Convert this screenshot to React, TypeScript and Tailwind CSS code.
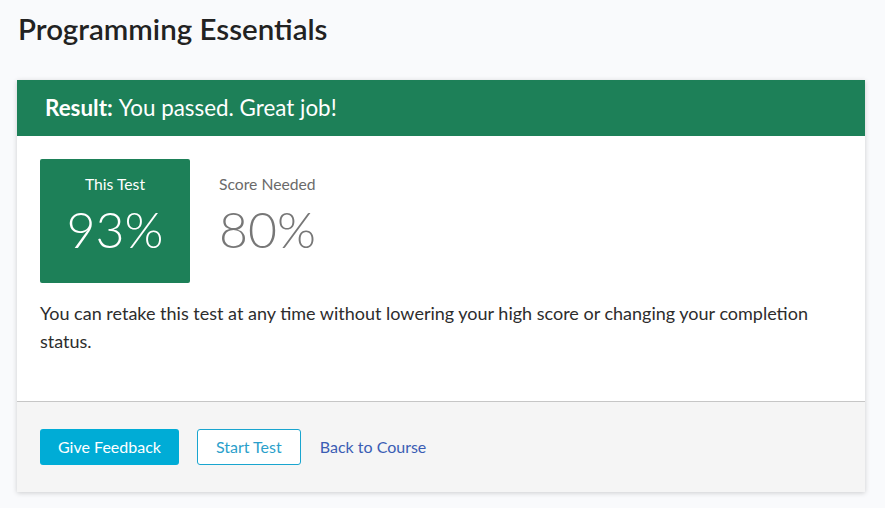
export default function App() {
  return (
    <div className="min-h-[508px] bg-[#f9fafc] px-[17px] pt-[11px] pb-[16px] font-['Lato',sans-serif]">
      <h1 className="pl-[1px] text-[29.5px] font-semibold leading-[36px] text-[#222]">Programming Essentials</h1>

      <div className="mt-[33px] w-[848px] bg-white shadow-[0_1px_5px_rgba(0,0,0,0.18)]">
        {/* header */}
        <div className="flex h-[56px] items-center bg-[#1d8058] px-[28px] text-[22.4px] text-white">
          <span className="font-bold">Result:</span>
          <span className="ml-[6px]">You passed. Great job!</span>
        </div>

        {/* scores */}
        <div className="px-[23px] pt-[23px] pb-[46px]">
          <div className="flex gap-[29px]">
            <div className="flex h-[124px] w-[150px] flex-col items-center rounded-[2px] bg-[#1d8058] pt-[16px] text-white">
              <div className="text-[15.7px] leading-[18px]">This Test</div>
              <div className="mt-[8px] text-[50px] font-light leading-[56px]">93%</div>
            </div>
            <div className="flex flex-col pt-[16px] text-[#777]">
              <div className="text-[15.7px] leading-[18px] text-[#6a6a6a]">Score Needed</div>
              <div className="mt-[8px] text-[50px] font-light leading-[56px]">80%</div>
            </div>
          </div>
          <p className="mt-[16px] max-w-[790px] text-[18px] leading-[28px] text-[#2d2d2d]">
            You can retake this test at any time without lowering your high score or changing your completion status.
          </p>
        </div>

        {/* footer */}
        <div className="flex h-[91px] items-center gap-[18px] border-t border-[#c6c6c6] bg-[#f5f5f5] px-[23px]">
          <button className="h-[36px] rounded-[3px] bg-[#00acd6] px-[18px] text-[16px] text-white">Give Feedback</button>
          <button className="h-[36px] rounded-[3px] border border-[#19a5cf] bg-white px-[18px] text-[16px] text-[#2b9fcb]">Start Test</button>
          <a className="ml-[1px] text-[16px] text-[#3a5db4]">Back to Course</a>
        </div>
      </div>
    </div>
  );
}
